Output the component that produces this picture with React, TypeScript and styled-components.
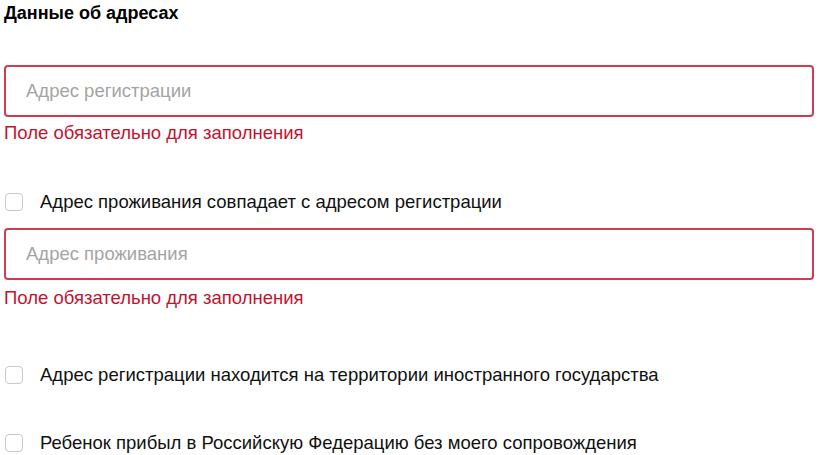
import React from 'react'
import styled, { createGlobalStyle } from 'styled-components'

const GlobalStyle = createGlobalStyle`
  html, body {
    margin: 0;
    padding: 0;
    background: #fff;
  }
  body {
    font-family: 'Liberation Sans', Arial, sans-serif;
    color: #111;
  }
`

const Page = styled.div`
  width: 820px;
  height: 455px;
  overflow: hidden;
  padding: 0 6px 0 4px;
  box-sizing: border-box;
`

const Title = styled.h2`
  margin: 0;
  font-size: 18px;
  line-height: 26px;
  font-weight: 700;
  color: #000;
`

const Input = styled.input<{ $top: number }>`
  display: block;
  box-sizing: border-box;
  width: 810px;
  height: 52px;
  margin: ${(p) => p.$top}px 0 0;
  padding: 0 20px;
  border: 2px solid #d23a52;
  border-radius: 4px;
  font-family: inherit;
  font-size: 18.5px;
  color: #111;
  outline: none;

  &::placeholder {
    color: #a4a4a4;
  }
`

const Error = styled.div<{ $top: number }>`
  margin-top: ${(p) => p.$top}px;
  font-size: 18.5px;
  line-height: 20px;
  color: #c4122f;
`

const CheckRow = styled.label<{ $top: number }>`
  display: flex;
  align-items: center;
  gap: 17px;
  height: 24px;
  margin-top: ${(p) => p.$top}px;
  padding-left: 1px;
  font-size: 18.5px;
  color: #111;
`

const Box = styled.span`
  width: 18px;
  height: 18px;
  box-sizing: border-box;
  border: 1.5px solid #c9c9c9;
  border-radius: 4px;
  background: #fff;
  flex: none;
`

const Check = ({ top, children }: { top: number; children: React.ReactNode }) => (
  <CheckRow $top={top}>
    <Box />
    <span>{children}</span>
  </CheckRow>
)

export default function App() {
  return (
    <Page>
      <GlobalStyle />
      <Title>Данные об адресах</Title>
      <Input $top={39} placeholder="Адрес регистрации" />
      <Error $top={6}>Поле обязательно для заполнения</Error>
      <Check top={47}>Адрес проживания совпадает с адресом регистрации</Check>
      <Input $top={14} placeholder="Адрес проживания" />
      <Error $top={8}>Поле обязательно для заполнения</Error>
      <Check top={55}>Адрес регистрации находится на территории иностранного государства</Check>
      <Check top={44}>Ребенок прибыл в Российскую Федерацию без моего сопровождения</Check>
    </Page>
  )
}
